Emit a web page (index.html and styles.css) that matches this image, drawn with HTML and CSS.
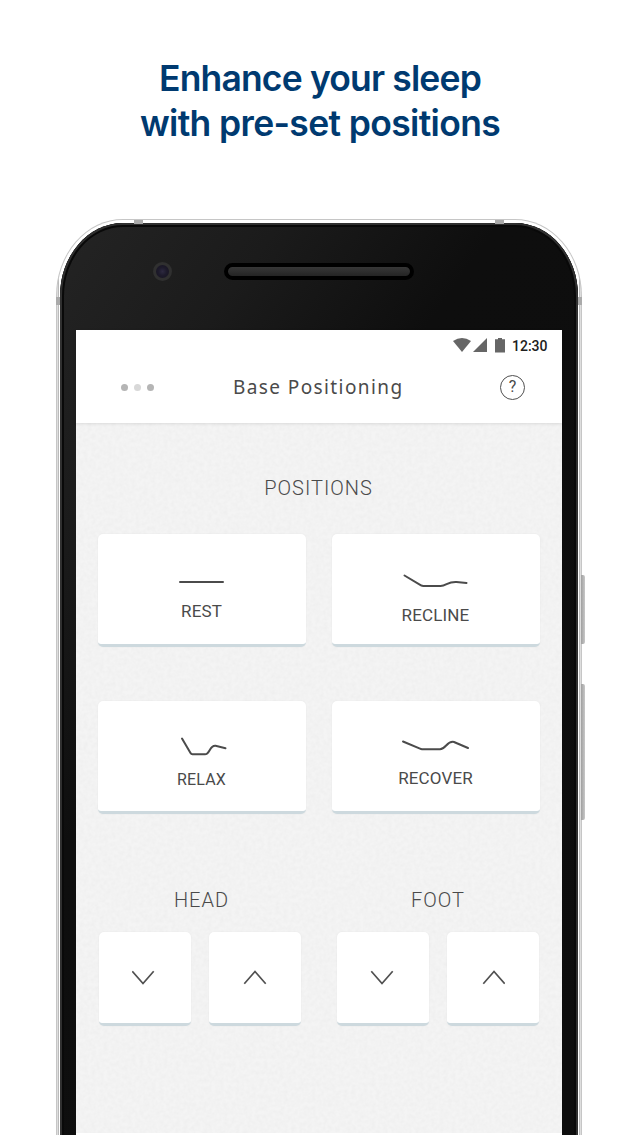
FILE: index.html
```html
<!DOCTYPE html>
<html lang="en">
<head>
<meta charset="utf-8">
<title>Base Positioning</title>
<link rel="stylesheet" href="styles.css">
</head>
<body>
<h1 class="headline"><span class="line-one">Enhance your sleep</span><br><span class="line-two">with pre-set positions</span></h1>
<div class="phone">
  <i class="band band-tl"></i><i class="band band-tr"></i><i class="band band-l"></i><i class="band band-r"></i>
  <i class="side-button power"></i><i class="side-button volume"></i>
  <div class="bezel">
    <div class="earpiece-row"><span class="camera"></span><span class="speaker"></span></div>
    <div class="screen">
      <header class="header">
        <div class="status">
          <svg class="wifi" width="18" height="14" viewBox="0 0 18 14"><path d="M0 3Q9-3 18 3L9 14Z"/></svg>
          <svg class="signal" width="14" height="14" viewBox="0 0 14 14"><path d="M14 0V14H0Z"/></svg>
          <svg class="battery" width="10" height="15" viewBox="0 0 10 15"><path d="M3 0H7V1.200H10V14.500H0V1.200H3Z"/></svg>
          <span class="time">12:30</span>
        </div>
        <div class="toolbar">
          <div class="dots"><i></i><i></i><i></i></div>
          <div class="title">Base Positioning</div>
          <div class="help">?</div>
        </div>
      </header>
      <main class="content">
        <svg class="grain" width="486" height="710"><filter id="paper" x="0" y="0" width="100%" height="100%"><feTurbulence type="fractalNoise" baseFrequency=".25" numOctaves="2" seed="4"/><feColorMatrix values="0 0 0 0 0  0 0 0 0 0  0 0 0 0 0  .035 0 0 0 -.01"/></filter><rect width="486" height="710" filter="url(#paper)"/></svg>
        <h2 class="section-title positions">POSITIONS</h2>
        <div class="cards">
          <div class="card rest"><svg width="70" height="24" viewBox="0 0 70 24"><path d="M13 12H56"/></svg><span>REST</span></div>
          <div class="card recline"><svg width="70" height="24" viewBox="0 0 70 24"><path d="M3.500 5.500L20 15.400Q21 16 22.500 16H39.500C45.500 16 46.500 11.500 55.500 12L65.500 13"/></svg><span>RECLINE</span></div>
          <div class="card relax"><svg width="70" height="24" viewBox="0 0 70 24"><path d="M15 3.500L23.500 18Q24.200 19.300 25.500 19.300H38C43 19.300 42.500 10 48.500 10.700L58.500 13.200"/></svg><span>RELAX</span></div>
          <div class="card recover"><svg width="70" height="24" viewBox="0 0 70 24"><path d="M2 5.500L19 12.700Q20 13.200 21 13.200H39C45 13.200 46 4.500 53 6L67 12"/></svg><span>RECOVER</span></div>
        </div>
        <div class="adjusters">
          <section class="adjuster"><h2 class="section-title head">HEAD</h2><div class="pair">
            <div class="key down"><svg width="24" height="16" viewBox="0 0 24 16"><path d="M.3 1.300L11 13.500L21.700 1.300"/></svg></div>
            <div class="key"><svg width="24" height="16" viewBox="0 0 24 16"><path d="M1.300 13.700L12 1.500L22.700 13.700"/></svg></div>
          </div></section>
          <section class="adjuster"><h2 class="section-title foot">FOOT</h2><div class="pair">
            <div class="key down"><svg width="24" height="16" viewBox="0 0 24 16"><path d="M1.300 1.300L12 13.500L22.700 1.300"/></svg></div>
            <div class="key"><svg width="24" height="16" viewBox="0 0 24 16"><path d="M2.300 13.700L13 1.500L23.700 13.700"/></svg></div>
          </div></section>
        </div>
      </main>
    </div>
  </div>
</div>
</body>
</html>
```
FILE: styles.css
```css
* { box-sizing: border-box; }
body { margin: 0; width: 640px; height: 1135px; overflow: hidden; background: #fff; font-family: Roboto, "Liberation Sans", sans-serif; color: #4a4a4a; }
.headline { height: 219px; margin: 0; padding-top: 56px; text-align: center; font: 600 35.500px/45px Inter, sans-serif; color: #003a70; }
.line-one { letter-spacing: -.85px; }
.line-two { letter-spacing: -.65px; }
.phone { position: relative; width: 526px; height: 926px; margin-left: 56px; padding: 3px; border: solid #c6c6c6; border-width: 1px 1px 0; border-radius: 67px 67px 0 0 / 77px 77px 0 0; background: linear-gradient(90deg, #dedede 0, #dedede 1px, #bbb 1px, #bbb 2px, #fff 2px, #fff 522px, #bbb 522px, #bbb 523px, #dedede 523px); }
.bezel { height: 922px; padding: 0 15px 0 16px; border-radius: 63px 63px 0 0 / 73px 73px 0 0; background: linear-gradient(125deg, #242424 0, #1b1b1b 180px, #0e0e0e 360px, #0d0d0d 100%); box-shadow: inset 0 0 0 2px #303030, inset 0 0 0 4px #090909; }
.earpiece-row { height: 107px; padding: 39px 0 0 77px; display: flex; align-items: flex-start; }
.camera { width: 19px; height: 19px; border: 3px solid #303030; border-radius: 50%; background: radial-gradient(#2d2940 0, #1d1a2b 45%, #171420 100%); }
.speaker { width: 190px; height: 17px; margin-left: 52px; margin-top: 1px; border: 4px solid #000; border-radius: 9px; background: linear-gradient(#373737, #242424); }
.band, .side-button { position: absolute; background: #aaa; }
.band-tl, .band-tr { width: 9px; height: 4px; top: 0; }
.band-tl { left: 77px; }
.band-tr { right: 77px; }
.band-l, .band-r { width: 4px; height: 8px; top: 77px; }
.band-l { left: -1px; }
.band-r { right: -1px; }
.side-button { width: 4px; right: -4px; border-radius: 0 2px 2px 0; background: linear-gradient(90deg, #9f9f9f, #c8c8c8); }
.power { top: 355px; height: 69px; }
.volume { top: 464px; height: 136px; }
.screen { width: 486px; height: 805px; background: #fff; }
.header { position: relative; height: 93px; background: #fff; box-shadow: 0 1px 3px rgba(0, 0, 0, .1); z-index: 1; }
.status { display: flex; height: 32px; padding: 8px 0 0 377px; fill: #666; }
.signal { margin-left: 2px; }
.battery { margin-left: 8px; }
.time { margin-left: 7px; color: #202020; font: 500 14px/16px Roboto, sans-serif; }
.toolbar { display: flex; align-items: center; height: 50px; padding-left: 45px; }
.dots { display: flex; width: 112px; gap: 6px; }
.dots i { width: 7px; height: 7px; border-radius: 50%; background: #b5b5b5; }
.dots i:nth-child(2) { background: #d8d8d8; }
.title { width: 267px; font: 400 19px/26px "Noto Sans", sans-serif; letter-spacing: 1.400px; white-space: nowrap; }
.help { width: 25px; height: 25px; border: 1.500px solid #505050; border-radius: 50%; text-align: center; font-size: 16px; line-height: 22px; }
.content { position: relative; height: 710px; background: #f4f4f4; padding: 53px 22px 0; }
.grain { position: absolute; left: 0; top: 0; }
.section-title { position: relative; margin: 0; text-align: center; font-weight: 300; font-size: 20px; line-height: 24px; letter-spacing: 1px; }
.positions { height: 58px; padding-right: 1px; }
.cards { position: relative; display: grid; grid-template-columns: 208px 208px; gap: 54px 26px; }
.card, .key { background: #fff; border-radius: 5px; border-bottom: 3px solid #cdd9de; box-shadow: 0 0 2px rgba(0, 0, 0, .06); }
.card { height: 113px; display: flex; flex-direction: column; align-items: center; padding: 36px 1px 0 0; font-size: 17px; line-height: 20px; letter-spacing: .15px; }
.card svg { flex: none; fill: none; stroke: #4b4b4b; stroke-width: 2; stroke-linecap: round; stroke-linejoin: round; }
.card span { margin-top: 7px; }
.card.recline span { margin-top: 11px; }
.card.recover { padding-top: 35px; }
.card.relax { padding-top: 34px; }
.card.relax span { margin-top: 11px; font-size: 16px; }
.card.recover span { margin-top: 8px; }
.adjusters { position: relative; display: flex; gap: 36px; padding: 74px 0 0 1px; }
.adjuster { width: 202px; }
.head, .foot { height: 44px; }
.head { padding-left: 3px; }
.pair { display: flex; gap: 18px; }
.key { width: 92px; height: 94px; padding-top: 38px; }
.key.down { padding-right: 3px; }
.key svg { display: block; margin: 0 auto; fill: none; stroke: #505050; stroke-width: 1.700; }
```
